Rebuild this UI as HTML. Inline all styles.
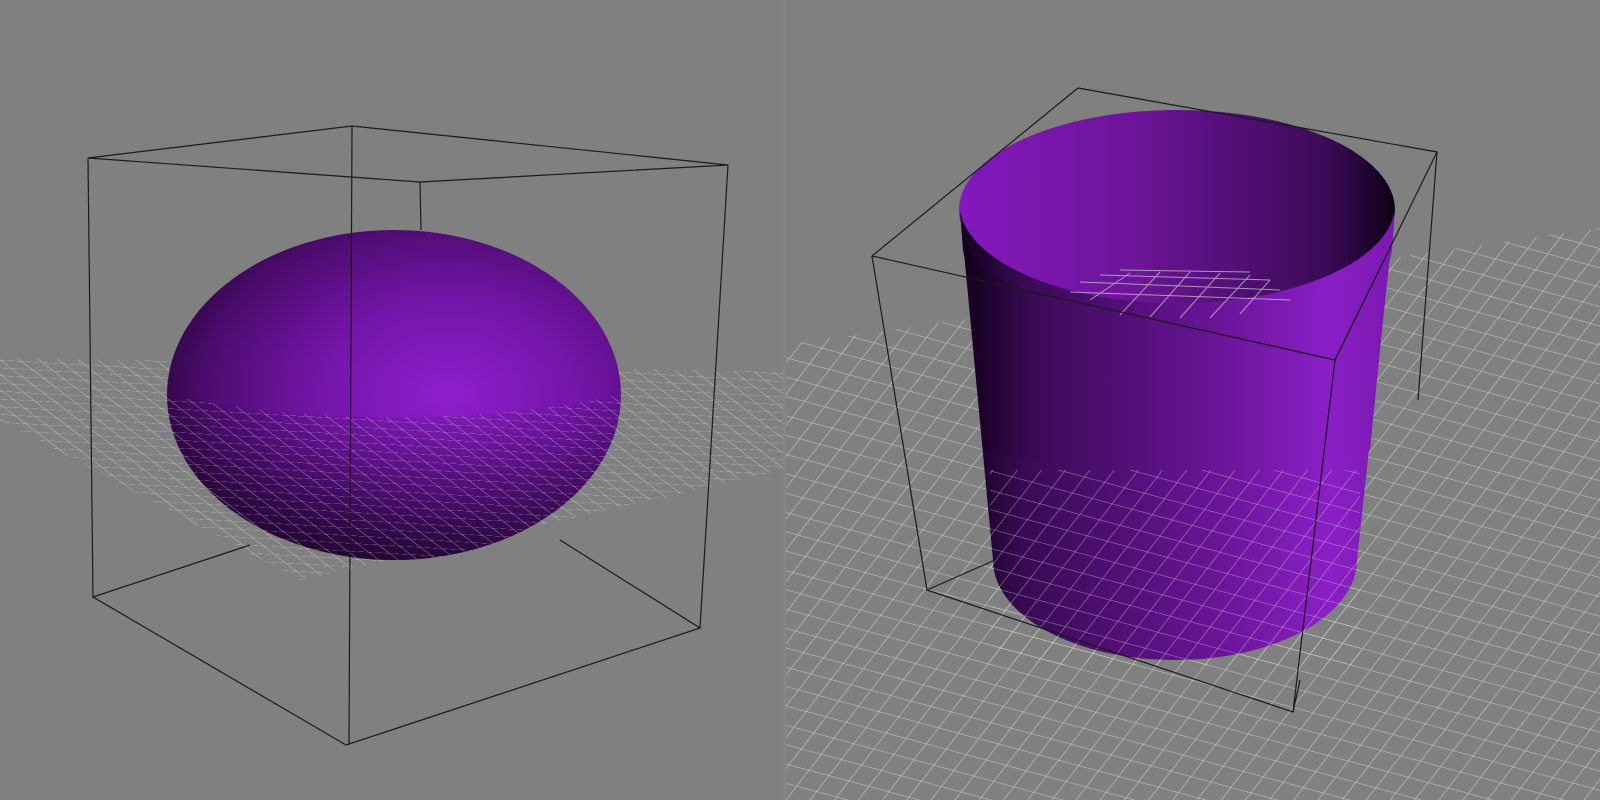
<!DOCTYPE html>
<html><head><meta charset="utf-8"><style>
html,body{margin:0;padding:0;width:1600px;height:800px;overflow:hidden;background:#808080}
svg{display:block}
</style></head><body>
<svg width="1600" height="800" viewBox="0 0 1600 800" xmlns="http://www.w3.org/2000/svg">
<defs>
<pattern id="gl" width="20" height="20" patternUnits="userSpaceOnUse" patternTransform="matrix(1.05 0.06 0.55 0.42 0 360)">
<path d="M0 0H20M0 0V20" stroke="#d8d8d8" stroke-width="1.6" fill="none"/>
</pattern>
<pattern id="gr" width="20" height="20" patternUnits="userSpaceOnUse" patternTransform="matrix(1.0 0.27 0.62 -0.8 786 300)">
<path d="M0 0H20M0 0V20" stroke="#d8d8d8" stroke-width="1.3" fill="none"/>
</pattern>
<radialGradient id="sph" cx="0.62" cy="0.5" r="0.72">
<stop offset="0" stop-color="#8e1fcc"/><stop offset="0.4" stop-color="#7315a8"/><stop offset="0.75" stop-color="#4a0c6c"/><stop offset="1" stop-color="#1c0328"/>
</radialGradient>
<linearGradient id="shade" x1="0" y1="0" x2="0" y2="1">
<stop offset="0" stop-color="#000" stop-opacity="0"/><stop offset="1" stop-color="#000" stop-opacity="0.55"/>
</linearGradient>
<linearGradient id="cyl" x1="0" x2="1">
<stop offset="0" stop-color="#12011c"/><stop offset="0.15" stop-color="#3a0a55"/><stop offset="0.6" stop-color="#6a1598"/><stop offset="0.85" stop-color="#8a1fc6"/><stop offset="1" stop-color="#7a19b0"/>
</linearGradient>
<linearGradient id="cin" x1="0" x2="1">
<stop offset="0" stop-color="#8418bd"/><stop offset="0.4" stop-color="#6c1599"/><stop offset="0.85" stop-color="#3a0a55"/><stop offset="1" stop-color="#0d0114"/>
</linearGradient>
<clipPath id="cl"><polygon points="0,358 783,372 783,470 300,580 0,420"/></clipPath>
<clipPath id="cr"><polygon points="786,345 1600,228 1600,800 786,800"/></clipPath>
<clipPath id="sphlow"><path d="M167 395 Q394 440 621 395 A227 165 0 0 1 167 395Z"/></clipPath>
</defs>
<rect x="0" y="0" width="783" height="800" fill="#808080"/>
<rect x="786" y="0" width="814" height="800" fill="#808080"/>
<rect x="783" y="0" width="3" height="800" fill="#858585"/>
<rect x="0" y="340" width="783" height="260" fill="url(#gl)" clip-path="url(#cl)" opacity="0.7"/>
<ellipse cx="394" cy="395" rx="227" ry="165" fill="url(#sph)"/>
<rect x="160" y="395" width="470" height="170" fill="url(#shade)" clip-path="url(#sphlow)"/>
<rect x="160" y="380" width="470" height="200" fill="url(#gl)" clip-path="url(#sphlow)" opacity="0.6"/>
<g stroke="#1a1a1a" stroke-width="1.2" fill="none">
<path d="M88 158L352 126L728 165L420 182L88 158"/>
<path d="M420 182L421 230"/>
<path d="M88 158L93 597L346 745L700 628L728 165"/>
<path d="M352 126L349 745"/>
<path d="M93 597L250 545M700 628L560 540"/>
</g>
<rect x="786" y="220" width="814" height="580" fill="url(#gr)" clip-path="url(#cr)" opacity="0.75"/>
<path d="M960 210 L993 560 A182 100 0 0 0 1357 560 L1395 210 Z" fill="url(#cyl)"/>
<ellipse cx="1177" cy="210" rx="218" ry="100" fill="url(#cin)"/>
<path d="M960 210 A218 100 0 0 0 1395 210 L1392 250 A215 100 0 0 1 963 250Z" fill="url(#cyl)"/>
<path d="M968 250 Q1000 305 1177 312 Q1350 305 1390 250 L1385 300 L1370 450 Q1180 500 985 450Z" fill="url(#cyl)"/>
<rect x="990" y="470" width="370" height="195" fill="url(#gr)" opacity="0.55" clip-path="url(#cr)"/>
<g stroke="#d0d0d0" stroke-width="1" opacity="0.7">
<path d="M1070 292L1290 300M1080 282L1280 290M1100 275L1270 280M1120 270L1250 272M1120 315L1160 272M1150 317L1190 272M1180 318L1220 273M1210 318L1250 275M1240 314L1270 280M1090 300L1130 273"/>
</g>
<g stroke="#1a1a1a" stroke-width="1.2" fill="none">
<path d="M1078 88L1437 152L1335 360L872 256L1078 88"/>
<path d="M872 256L927 590L1293 712L1335 360"/>
<path d="M1437 152L1418 400"/>
<path d="M1293 712L1300 680M927 590L995 560"/>
</g>
</svg>
</body></html>
